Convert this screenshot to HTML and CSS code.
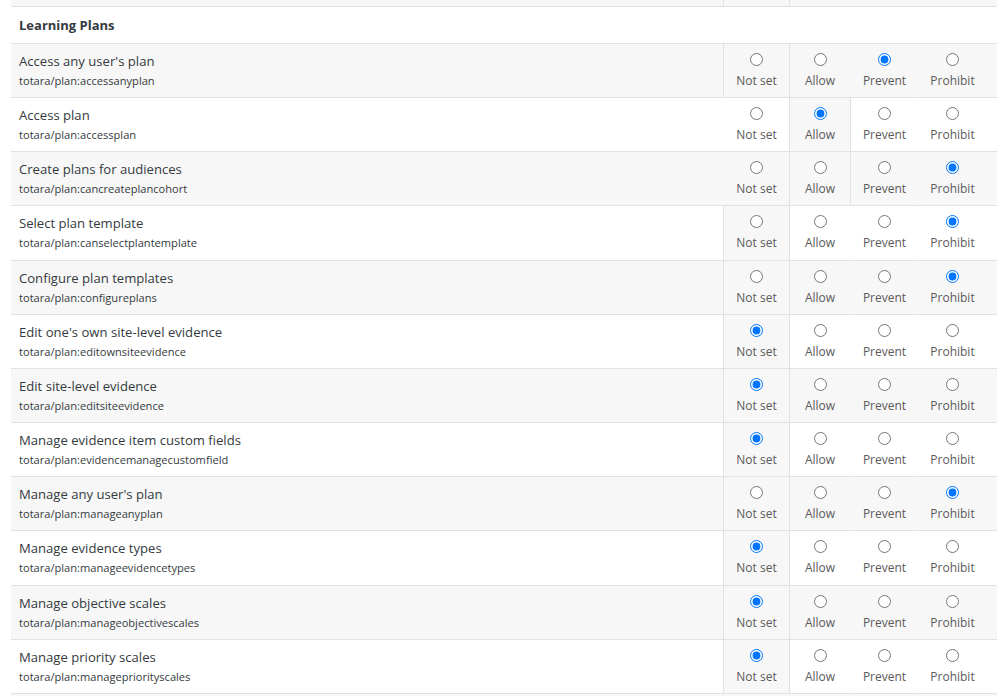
FILE: index.html
```html
<!DOCTYPE html>
<html lang="en">
<head>
    <meta charset="UTF-8">
    <title>Define role - Learning Plans</title>
    <link rel="stylesheet" href="styles.css">
</head>
<body>
    <div class="wrap">
        <table class="caps">
            <colgroup>
                <col class="c_name">
                <col class="c_notset">
                <col class="c_allow">
                <col class="c_prevent">
                <col class="c_prohibit">
                <col class="c_risk">
            </colgroup>
            <tbody>
                <!-- tail of the previous component -->
                <tr class="odd stub">
                    <td></td>
                    <td class="perm def"></td>
                    <td class="perm"></td>
                    <td class="perm"></td>
                    <td class="perm"></td>
                    <td class="risk"></td>
                </tr>

                <tr class="section">
                    <td colspan="6">Learning Plans</td>
                </tr>

                <tr class="odd">
                    <td class="name"><span class="title">Access any user's plan</span><span class="cap">totara/plan:accessanyplan</span></td>
                    <td class="perm def"><label><input type="radio" name="accessanyplan"><span>Not set</span></label></td>
                    <td class="perm"><label><input type="radio" name="accessanyplan"><span>Allow</span></label></td>
                    <td class="perm"><label><input type="radio" name="accessanyplan" checked><span>Prevent</span></label></td>
                    <td class="perm"><label><input type="radio" name="accessanyplan"><span>Prohibit</span></label></td>
                    <td class="risk"></td>
                </tr>
                <tr>
                    <td class="name"><span class="title">Access plan</span><span class="cap">totara/plan:accessplan</span></td>
                    <td class="perm"><label><input type="radio" name="accessplan"><span>Not set</span></label></td>
                    <td class="perm def"><label><input type="radio" name="accessplan" checked><span>Allow</span></label></td>
                    <td class="perm"><label><input type="radio" name="accessplan"><span>Prevent</span></label></td>
                    <td class="perm"><label><input type="radio" name="accessplan"><span>Prohibit</span></label></td>
                    <td class="risk"></td>
                </tr>
                <tr class="odd">
                    <td class="name"><span class="title">Create plans for audiences</span><span class="cap">totara/plan:cancreateplancohort</span></td>
                    <td class="perm"><label><input type="radio" name="cancreateplancohort"><span>Not set</span></label></td>
                    <td class="perm def"><label><input type="radio" name="cancreateplancohort"><span>Allow</span></label></td>
                    <td class="perm"><label><input type="radio" name="cancreateplancohort"><span>Prevent</span></label></td>
                    <td class="perm"><label><input type="radio" name="cancreateplancohort" checked><span>Prohibit</span></label></td>
                    <td class="risk"></td>
                </tr>
                <tr>
                    <td class="name"><span class="title">Select plan template</span><span class="cap">totara/plan:canselectplantemplate</span></td>
                    <td class="perm def"><label><input type="radio" name="canselectplantemplate"><span>Not set</span></label></td>
                    <td class="perm"><label><input type="radio" name="canselectplantemplate"><span>Allow</span></label></td>
                    <td class="perm"><label><input type="radio" name="canselectplantemplate"><span>Prevent</span></label></td>
                    <td class="perm"><label><input type="radio" name="canselectplantemplate" checked><span>Prohibit</span></label></td>
                    <td class="risk"></td>
                </tr>
                <tr class="odd">
                    <td class="name"><span class="title">Configure plan templates</span><span class="cap">totara/plan:configureplans</span></td>
                    <td class="perm def"><label><input type="radio" name="configureplans"><span>Not set</span></label></td>
                    <td class="perm"><label><input type="radio" name="configureplans"><span>Allow</span></label></td>
                    <td class="perm"><label><input type="radio" name="configureplans"><span>Prevent</span></label></td>
                    <td class="perm"><label><input type="radio" name="configureplans" checked><span>Prohibit</span></label></td>
                    <td class="risk"></td>
                </tr>
                <tr>
                    <td class="name"><span class="title">Edit one's own site-level evidence</span><span class="cap">totara/plan:editownsiteevidence</span></td>
                    <td class="perm def"><label><input type="radio" name="editownsiteevidence" checked><span>Not set</span></label></td>
                    <td class="perm"><label><input type="radio" name="editownsiteevidence"><span>Allow</span></label></td>
                    <td class="perm"><label><input type="radio" name="editownsiteevidence"><span>Prevent</span></label></td>
                    <td class="perm"><label><input type="radio" name="editownsiteevidence"><span>Prohibit</span></label></td>
                    <td class="risk"></td>
                </tr>
                <tr class="odd">
                    <td class="name"><span class="title">Edit site-level evidence</span><span class="cap">totara/plan:editsiteevidence</span></td>
                    <td class="perm def"><label><input type="radio" name="editsiteevidence" checked><span>Not set</span></label></td>
                    <td class="perm"><label><input type="radio" name="editsiteevidence"><span>Allow</span></label></td>
                    <td class="perm"><label><input type="radio" name="editsiteevidence"><span>Prevent</span></label></td>
                    <td class="perm"><label><input type="radio" name="editsiteevidence"><span>Prohibit</span></label></td>
                    <td class="risk"></td>
                </tr>
                <tr>
                    <td class="name"><span class="title">Manage evidence item custom fields</span><span class="cap">totara/plan:evidencemanagecustomfield</span></td>
                    <td class="perm def"><label><input type="radio" name="evidencemanagecustomfield" checked><span>Not set</span></label></td>
                    <td class="perm"><label><input type="radio" name="evidencemanagecustomfield"><span>Allow</span></label></td>
                    <td class="perm"><label><input type="radio" name="evidencemanagecustomfield"><span>Prevent</span></label></td>
                    <td class="perm"><label><input type="radio" name="evidencemanagecustomfield"><span>Prohibit</span></label></td>
                    <td class="risk"></td>
                </tr>
                <tr class="odd">
                    <td class="name"><span class="title">Manage any user's plan</span><span class="cap">totara/plan:manageanyplan</span></td>
                    <td class="perm def"><label><input type="radio" name="manageanyplan"><span>Not set</span></label></td>
                    <td class="perm"><label><input type="radio" name="manageanyplan"><span>Allow</span></label></td>
                    <td class="perm"><label><input type="radio" name="manageanyplan"><span>Prevent</span></label></td>
                    <td class="perm"><label><input type="radio" name="manageanyplan" checked><span>Prohibit</span></label></td>
                    <td class="risk"></td>
                </tr>
                <tr>
                    <td class="name"><span class="title">Manage evidence types</span><span class="cap">totara/plan:manageevidencetypes</span></td>
                    <td class="perm def"><label><input type="radio" name="manageevidencetypes" checked><span>Not set</span></label></td>
                    <td class="perm"><label><input type="radio" name="manageevidencetypes"><span>Allow</span></label></td>
                    <td class="perm"><label><input type="radio" name="manageevidencetypes"><span>Prevent</span></label></td>
                    <td class="perm"><label><input type="radio" name="manageevidencetypes"><span>Prohibit</span></label></td>
                    <td class="risk"></td>
                </tr>
                <tr class="odd">
                    <td class="name"><span class="title">Manage objective scales</span><span class="cap">totara/plan:manageobjectivescales</span></td>
                    <td class="perm def"><label><input type="radio" name="manageobjectivescales" checked><span>Not set</span></label></td>
                    <td class="perm"><label><input type="radio" name="manageobjectivescales"><span>Allow</span></label></td>
                    <td class="perm"><label><input type="radio" name="manageobjectivescales"><span>Prevent</span></label></td>
                    <td class="perm"><label><input type="radio" name="manageobjectivescales"><span>Prohibit</span></label></td>
                    <td class="risk"></td>
                </tr>
                <tr>
                    <td class="name"><span class="title">Manage priority scales</span><span class="cap">totara/plan:managepriorityscales</span></td>
                    <td class="perm def"><label><input type="radio" name="managepriorityscales" checked><span>Not set</span></label></td>
                    <td class="perm"><label><input type="radio" name="managepriorityscales"><span>Allow</span></label></td>
                    <td class="perm"><label><input type="radio" name="managepriorityscales"><span>Prevent</span></label></td>
                    <td class="perm"><label><input type="radio" name="managepriorityscales"><span>Prohibit</span></label></td>
                    <td class="risk"></td>
                </tr>
                <!-- head of the next row, cut by the window -->
                <tr class="odd stub">
                    <td></td>
                    <td class="perm"></td>
                    <td class="perm"></td>
                    <td class="perm"></td>
                    <td class="perm"></td>
                    <td class="risk"></td>
                </tr>
            </tbody>
        </table>
    </div>
</body>
</html>
```

FILE: styles.css
```css
*{
    margin:0;
    padding:0;
    box-sizing: border-box;
}
html,body{
    overflow: hidden;
    background: #fff;
}
body{
    font-family: "Open Sans", "Noto Sans", sans-serif;
    color: #343a40;
}
.wrap{
    padding-left: 11px;
}
.caps{
    width: 986px;
    table-layout: fixed;
    border-spacing: 0;
}
.c_name{ width: 712px; }
.c_notset{ width: 66px; }
.c_allow{ width: 61px; }
.c_prevent{ width: 68px; }
.c_prohibit{ width: 68px; }
.c_risk{ width: 11px; }

.caps td{
    border-top: 1px solid #dee2e6;
    vertical-align: top;
}
.caps tr.odd td{
    background: #f7f7f7;
}
.caps tr.stub td{
    height: 3px;
    padding: 0;
}
.caps tr.stub:first-child td{
    height: 6px;
    border-top: 0;
}
.section td{
    padding: 8px;
    font-size: 13px;
    line-height: 20px;
    font-weight: bold;
}

.name{
    padding: 7px 8px 7.17px;
}
.name .title{
    display: block;
    font-size: 13.1px;
    line-height: 21px;
}
.name .cap{
    display: block;
    font-size: 11.1px;
    line-height: 18px;
}

.perm{
    border-left: 1px solid transparent;
    padding-top: 9px;
}
.caps td.def{
    background: #f7f7f7;
    border-left-color: #dee2e6;
}
.caps td.def + td{
    border-left-color: #dee2e6;
}
.perm label{
    display: flex;
    flex-direction: column;
    align-items: center;
    font-size: 12px;
    line-height: 18px;
    color: #5a5a5a;
}
.perm input{
    width: 13px;
    height: 13px;
    margin: 0 0 6px;
    accent-color: #0075ff;
}
```
